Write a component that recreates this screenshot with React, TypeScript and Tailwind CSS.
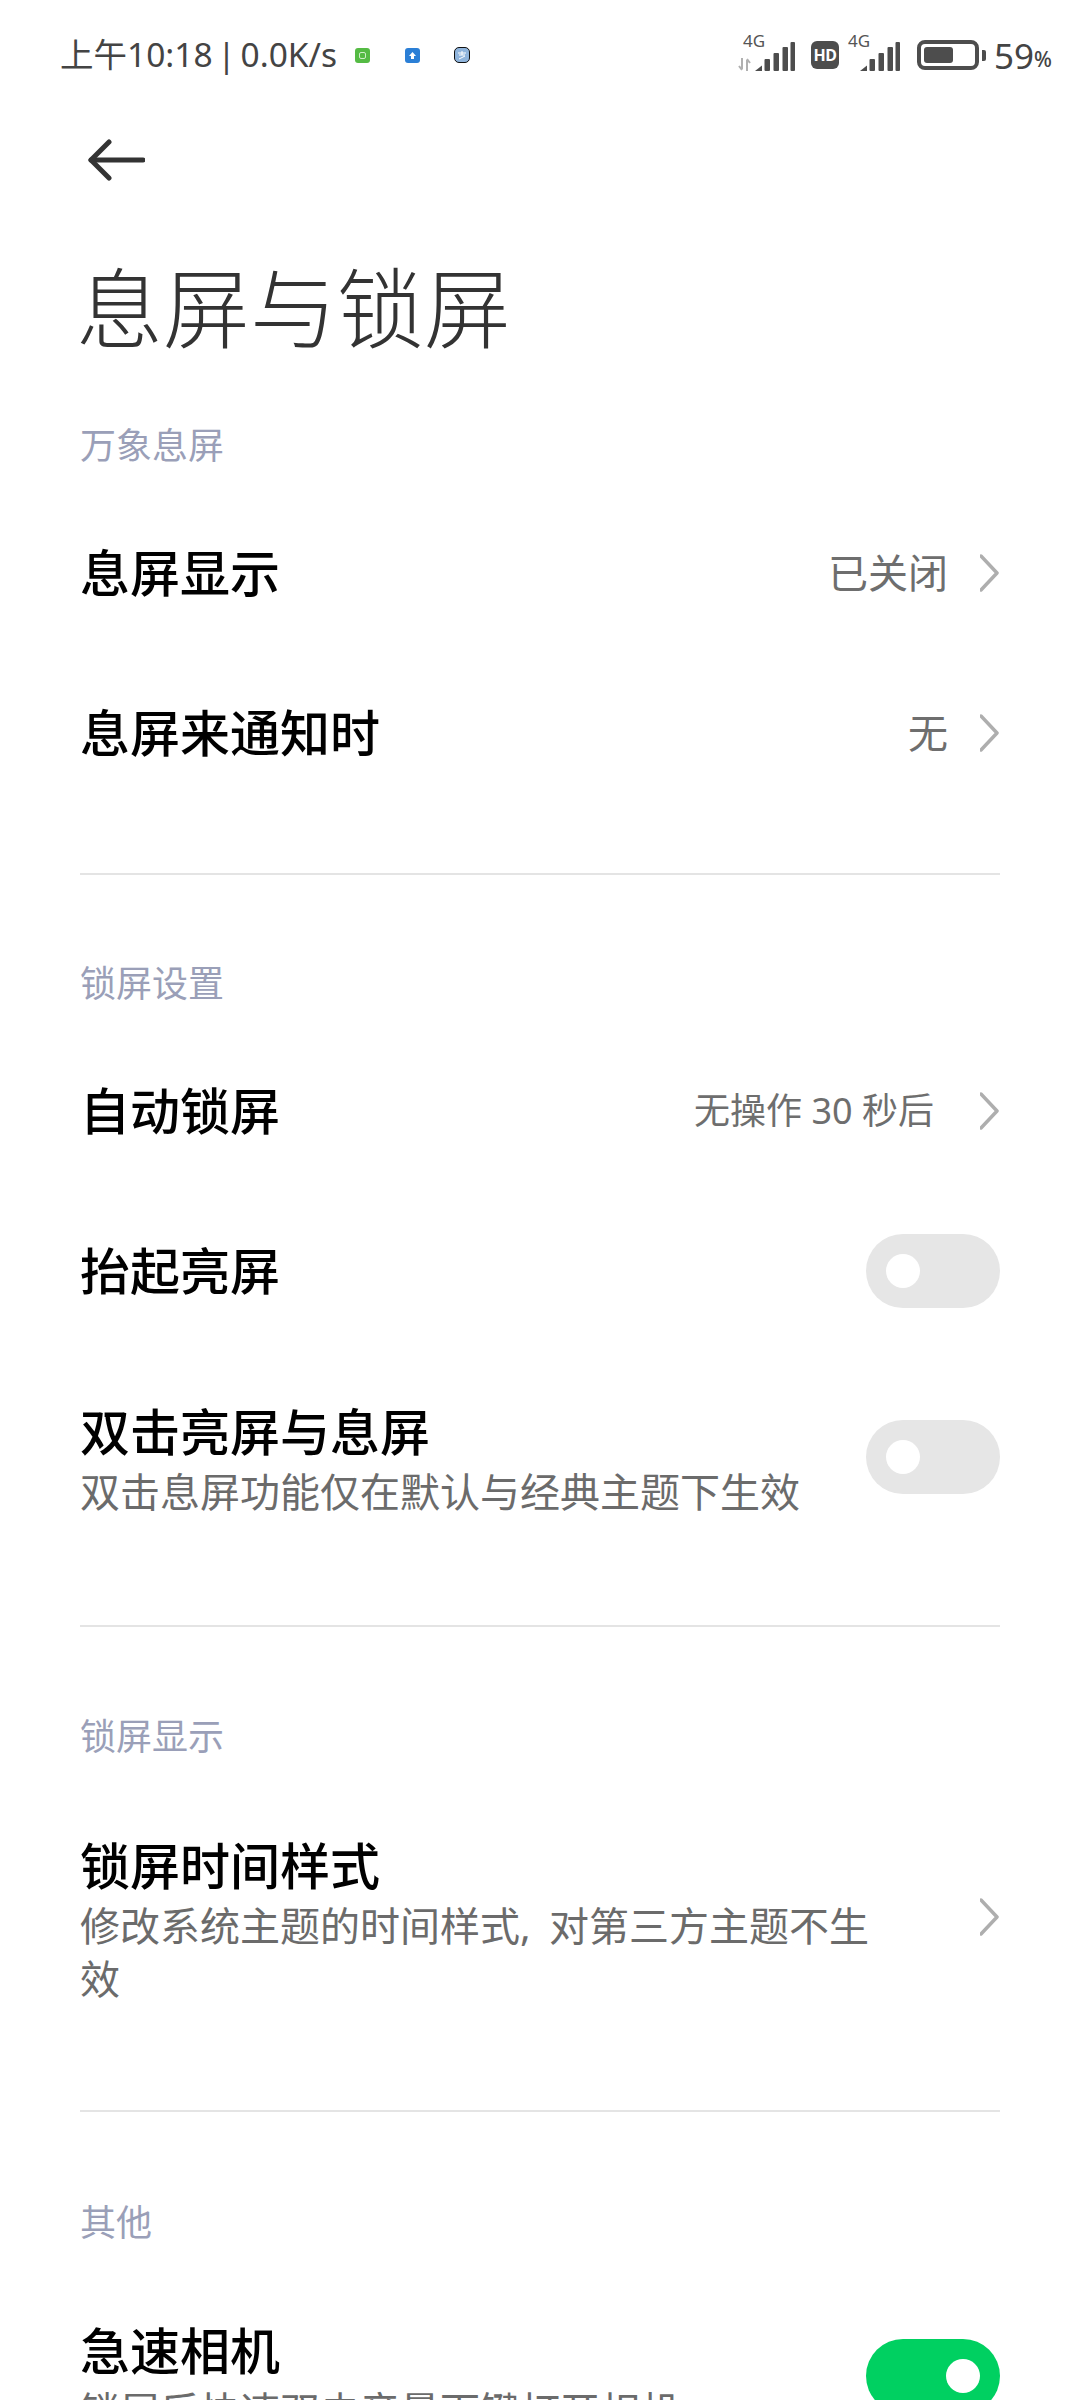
const font = { fontFamily: '"Noto Sans", "Noto Sans CJK SC", sans-serif' }

function Signal() {
  return (
    <svg width="40" height="30" viewBox="0 0 40 30" fill="#4d4d4d">
      <path d="M0 29 L7 23.5 V29 Z" />
      <rect x="9.5" y="17" width="5.5" height="12" rx="1" />
      <rect x="18.5" y="11" width="5.5" height="18" rx="1" />
      <rect x="27.5" y="5" width="5.5" height="24" rx="1" />
      <rect x="35.5" y="0" width="4.5" height="29" rx="1" />
    </svg>
  )
}

function StatusBar() {
  return (
    <div className="flex h-[110px] items-center justify-between pl-[60px] pr-[28px] text-[#444]">
      <div className="flex items-center">
        <span className="w-[295px] text-[33.5px] leading-none [word-spacing:-4px]">上午10:18 | 0.0K/s</span>
        <span className="flex h-[15px] w-[15px] items-center justify-center rounded-[3px] bg-[#55bb44]">
          <span className="h-[7px] w-[7px] rounded-[2px] border border-[#cfeec8]" />
        </span>
        <span className="ml-[35px] flex h-[15px] w-[15px] items-center justify-center rounded-[3px] bg-[#2b7fd6]">
          <svg width="9" height="9" viewBox="0 0 9 9" fill="#fff">
            <path d="M4.5 1 L8 5 H6 V8 H3 V5 H1 Z" />
          </svg>
        </span>
        <span className="ml-[34px] flex h-[16px] w-[16px] items-center justify-center rounded-[5px] border border-[#111] bg-[#8fb4dc]">
          <svg width="10" height="10" viewBox="0 0 10 10" fill="none" stroke="#fff" strokeWidth="1">
            <path d="M1 3 H9 M5 1 V5 M2 5 H8 M2 9 L8 6" />
          </svg>
        </span>
      </div>
      <div className="flex items-center">
        <div className="relative flex h-[34px] w-[57px] items-end justify-end">
          <span className="absolute left-[5px] top-[-6px] text-[17px] leading-none text-[#555]">4G</span>
          <svg width="13" height="13" viewBox="0 0 13 13" fill="none" stroke="#b0b0b0" strokeWidth="2" className="absolute bottom-[1px] left-0">
            <path d="M4 0 V11 M1 8 L4 12 M9 13 V2 M12 5 L9 1" />
          </svg>
          <Signal />
        </div>
        <span className="ml-[16px] flex h-[28px] w-[28px] items-center justify-center rounded-[6px] bg-[#4d4d4d] text-[16px] font-bold leading-none tracking-[-0.5px] text-white">
          HD
        </span>
        <div className="relative ml-[9px] flex h-[34px] w-[52px] items-end justify-end">
          <span className="absolute left-0 top-[-6px] text-[17px] leading-none text-[#555]">4G</span>
          <Signal />
        </div>
        <div className="ml-[17px] flex h-[30px] w-[62px] items-center rounded-[8px] border-[4px] border-[#4d4d4d] p-[3px]">
          <span className="h-full w-[29px] rounded-[3px] bg-[#4d4d4d]" />
        </div>
        <span className="ml-[3px] h-[11px] w-[4px] rounded-r-[2px] bg-[#4d4d4d]" />
        <span className="ml-[8px] text-[35px] leading-none">59</span>
        <span className="mt-[8px] text-[21px] font-medium leading-none">%</span>
      </div>
    </div>
  )
}

function SectionTitle({ children }: { children: string }) {
  return (
    <div className="flex h-[78px] items-center px-[80px] pt-[2px] text-[36px] leading-none text-[#9a9fb8]">
      {children}
    </div>
  )
}

function Divider() {
  return <div className="mx-[80px] h-[2px] bg-[#e4e4e4]" />
}

function Toggle({ on }: { on?: boolean }) {
  return (
    <div
      className={`flex h-[74px] w-[134px] shrink-0 items-center rounded-full px-[20px] ${
        on ? 'justify-end bg-[#00d061]' : 'bg-[#e6e6e6]'
      }`}
    >
      <span className="h-[34px] w-[34px] rounded-full bg-white" />
    </div>
  )
}

function Chevron() {
  return (
    <svg width="20" height="38" viewBox="0 0 20 38" fill="none" stroke="#aeaeae" strokeWidth="3.5" strokeLinecap="round" strokeLinejoin="round" className="ml-[32px] shrink-0">
      <path d="M1 2 L17 19 L1 36" />
    </svg>
  )
}

interface RowProps {
  title: string
  sub?: string
  value?: string
  valueClass?: string
  arrow?: boolean
  on?: boolean
  toggle?: boolean
  className?: string
}

function Row({ title, sub, value, valueClass, arrow, on, toggle, className }: RowProps) {
  return (
    <div className={`flex items-center justify-between px-[80px] ${className ?? 'h-[160px]'}`}>
      <div className={`min-w-0 max-w-[800px] ${sub ? 'pt-[6px]' : ''}`}>
        <div className="text-[50px] font-medium leading-[60px] text-black">{title}</div>
        {sub && <div className="mt-[3px] text-[40px] leading-[53px] text-[#6b6b6b] [word-spacing:8px]">{sub}</div>}
      </div>
      {toggle && <Toggle on={on} />}
      {!toggle && (
        <div className="flex shrink-0 items-center">
          {value && <span className={`leading-none text-[#6e6e6e] ${valueClass ?? 'text-[40px]'}`}>{value}</span>}
          {arrow && <Chevron />}
        </div>
      )}
    </div>
  )
}

export default function App() {
  return (
    <div className="h-[2400px] w-[1080px] overflow-hidden bg-white" style={font}>
      <StatusBar />
      <div className="flex h-[100px] items-center pl-[88px]">
        <svg width="57" height="42" viewBox="0 0 57 42" fill="none" stroke="#333" strokeWidth="5" strokeLinecap="round" strokeLinejoin="round">
          <path d="M3 21 H55" />
          <path d="M21 3 L3 21 L21 39" />
        </svg>
      </div>
      <h1 className="flex h-[196px] items-center px-[76px] text-[87px] font-light leading-none text-[#333]">息屏与锁屏</h1>

      <SectionTitle>万象息屏</SectionTitle>
      <div className="mt-[9px]">
        <Row title="息屏显示" value="已关闭" arrow />
        <Row title="息屏来通知时" value="无" arrow />
      </div>
      <div className="mt-[60px]">
        <Divider />
      </div>

      <div className="mt-[69px]">
        <SectionTitle>锁屏设置</SectionTitle>
      </div>
      <div className="mt-[9px]">
        <Row title="自动锁屏" value="无操作 30 秒后" valueClass="mr-[14px] text-[36px]" arrow />
        <Row title="抬起亮屏" toggle />
        <Row title="双击亮屏与息屏" sub="双击息屏功能仅在默认与经典主题下生效" toggle className="h-[212px]" />
      </div>
      <div className="mt-[62px]">
        <Divider />
      </div>

      <div className="mt-[70px]">
        <SectionTitle>锁屏显示</SectionTitle>
      </div>
      <div className="mt-[9px]">
        <Row title="锁屏时间样式" sub="修改系统主题的时间样式, 对第三方主题不生效" arrow className="h-[266px]" />
      </div>
      <div className="mt-[60px]">
        <Divider />
      </div>

      <div className="mt-[71px]">
        <SectionTitle>其他</SectionTitle>
      </div>
      <div className="mt-[9px]">
        <Row title="急速相机" sub="锁屏后快速双击音量下键打开相机" toggle on className="h-[212px]" />
      </div>
    </div>
  )
}
